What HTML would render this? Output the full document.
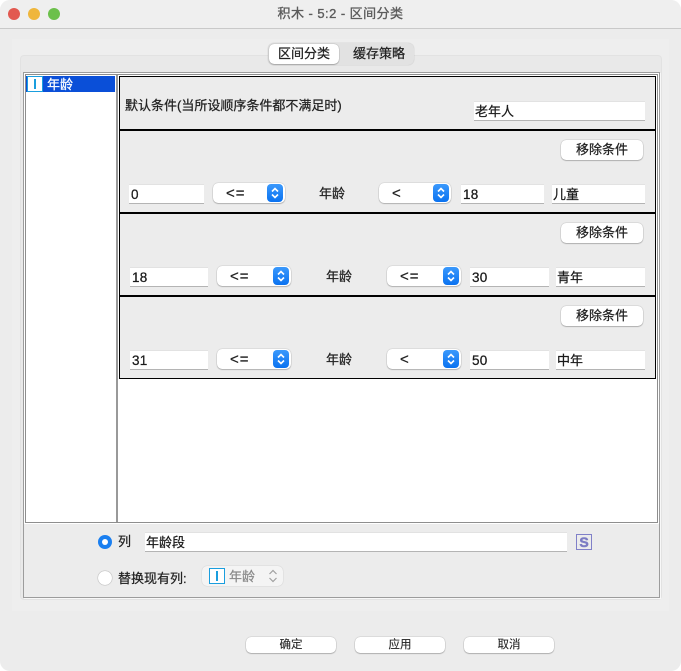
<!DOCTYPE html>
<html><head><meta charset="utf-8">
<style>
html,body{margin:0;padding:0;background:#fff;}
#w{position:relative;width:681px;height:671px;overflow:hidden;background:#fff;font-family:"Liberation Sans","Noto Sans CJK SC",sans-serif;font-size:13px;color:#222;-webkit-text-stroke:.25px currentColor;}
#w div{position:absolute;box-sizing:border-box;}
.t{white-space:nowrap;line-height:18px;height:18px;}
.f{background:#fff;border-top:1px solid #e2e2e2;border-bottom:1px solid #b4b4b4;height:20px;line-height:19px;font-size:13px;padding-left:1px;white-space:nowrap;color:#1a1a1a;}
.n{padding-left:2px;font-size:13.5px;letter-spacing:.2px;}
.b{background:#fff;border-radius:5px;box-shadow:0 0 1px rgba(0,0,0,.45),0 1px 1px rgba(0,0,0,.2);text-align:center;white-space:nowrap;color:#222;}
.k{font-size:11.5px;line-height:17px;height:16px;width:90px;top:637px;-webkit-text-stroke:.1px #222;}
.s{background:#fff;border-radius:5px;box-shadow:0 0 1px rgba(0,0,0,.4),0 1px 1px rgba(0,0,0,.2);height:20px;line-height:21px;white-space:nowrap;font-size:15px;letter-spacing:1px;}
.a{background:linear-gradient(#3b99fc,#0a72f0);border-radius:4px;width:16px;height:18px;top:1px;right:2px;}
.a svg{display:block;}
.line{background:#000;}
</style></head><body>
<div id="w">
<div style="left:0;top:0;width:681px;height:671px;background:#ececec;border-radius:10px;"></div>
<div style="left:0;top:0;width:681px;height:29px;background:#efefef;border-radius:10px 10px 0 0;border-bottom:1px solid #c9c9c9;"></div>
<div style="left:8px;top:8px;width:12px;height:12px;border-radius:50%;background:#e25950;"></div>
<div style="left:28px;top:8px;width:12px;height:12px;border-radius:50%;background:#efb63c;"></div>
<div style="left:48px;top:8px;width:12px;height:12px;border-radius:50%;background:#6cc04b;"></div>
<div class="t" style="left:0;width:681px;top:5px;text-align:center;color:#5c5c5c;font-size:13px;letter-spacing:.45px;-webkit-text-stroke:.35px #5c5c5c;">积木 - 5:2 - 区间分类</div>

<div style="left:12px;top:39px;width:657px;height:572px;background:#eeeeee;"></div>
<div style="left:20px;top:55px;width:642px;height:545px;background:#e9e9e9;border:1px solid #e2e2e2;border-radius:4px;"></div>

<div style="left:268px;top:43px;width:146px;height:22px;background:#e2e2e2;border-radius:6px;box-shadow:0 0 1px rgba(0,0,0,.25);"></div>
<div class="b" style="left:269px;top:44px;width:70px;height:20px;line-height:20px;">区间分类</div>
<div class="t" style="left:353px;top:45px;color:#222;">缓存策略</div>

<div style="left:23px;top:72px;width:637px;height:526px;background:#ececec;border:1px solid #9c9c9c;box-shadow:1px 1px 0 #f8f8f8;"></div>
<div style="left:25px;top:74px;width:633px;height:449px;background:#fff;border:1px solid #8e8e8e;outline:1px solid #fff;"></div>
<div style="left:116px;top:75px;width:2px;height:447px;background:#999;"></div>

<div style="left:26px;top:76px;width:89px;height:16px;background:#0a4fd8;"></div>
<div style="left:27px;top:76px;width:16px;height:16px;background:#fff;border:1px solid #1a9ede;"></div>
<div style="left:34px;top:79px;width:2px;height:10px;background:#1a9ede;"></div>
<div class="t" style="left:47px;top:76px;color:#fff;">年龄</div>

<div style="left:119px;top:76px;width:537px;height:303px;background:#ececec;border:1px solid #000;"></div>
<div class="line" style="left:120px;top:129px;width:535px;height:2px;"></div>
<div class="line" style="left:120px;top:212px;width:535px;height:2px;"></div>
<div class="line" style="left:120px;top:295px;width:535px;height:2px;"></div>

<div class="t" style="left:125px;top:97px;">默认条件(当所设顺序条件都不满足时)</div>
<div class="f" style="left:474px;top:101px;width:171px;">老年人</div>

<div class="b" style="left:561px;top:140px;width:82px;height:20px;line-height:20px;">移除条件</div>
<div class="f n" style="left:129px;top:184px;width:75px;">0</div>
<div class="s" style="left:213px;top:183px;width:72px;padding-left:13px;">&lt;=<div class="a"><svg width="16" height="18" viewBox="0 0 16 18"><path d="M5 7.5l3-3 3 3M5 10.5l3 3 3-3" fill="none" stroke="#fff" stroke-width="1.6"/></svg></div></div>
<div class="t" style="left:319px;top:185px;">年龄</div>
<div class="s" style="left:379px;top:183px;width:72px;padding-left:13px;">&lt;<div class="a"><svg width="16" height="18" viewBox="0 0 16 18"><path d="M5 7.5l3-3 3 3M5 10.5l3 3 3-3" fill="none" stroke="#fff" stroke-width="1.6"/></svg></div></div>
<div class="f n" style="left:461px;top:184px;width:83px;">18</div>
<div class="f" style="left:552px;top:184px;width:93px;">儿童</div>

<div class="b" style="left:561px;top:223px;width:82px;height:20px;line-height:20px;">移除条件</div>
<div class="f n" style="left:130px;top:267px;width:78px;">18</div>
<div class="s" style="left:217px;top:266px;width:74px;padding-left:13px;">&lt;=<div class="a"><svg width="16" height="18" viewBox="0 0 16 18"><path d="M5 7.5l3-3 3 3M5 10.5l3 3 3-3" fill="none" stroke="#fff" stroke-width="1.6"/></svg></div></div>
<div class="t" style="left:326px;top:268px;">年龄</div>
<div class="s" style="left:387px;top:266px;width:74px;padding-left:13px;">&lt;=<div class="a"><svg width="16" height="18" viewBox="0 0 16 18"><path d="M5 7.5l3-3 3 3M5 10.5l3 3 3-3" fill="none" stroke="#fff" stroke-width="1.6"/></svg></div></div>
<div class="f n" style="left:470px;top:267px;width:79px;">30</div>
<div class="f" style="left:556px;top:267px;width:89px;">青年</div>

<div class="b" style="left:561px;top:306px;width:82px;height:20px;line-height:20px;">移除条件</div>
<div class="f n" style="left:130px;top:350px;width:78px;">31</div>
<div class="s" style="left:217px;top:349px;width:74px;padding-left:13px;">&lt;=<div class="a"><svg width="16" height="18" viewBox="0 0 16 18"><path d="M5 7.5l3-3 3 3M5 10.5l3 3 3-3" fill="none" stroke="#fff" stroke-width="1.6"/></svg></div></div>
<div class="t" style="left:326px;top:351px;">年龄</div>
<div class="s" style="left:387px;top:349px;width:74px;padding-left:13px;">&lt;<div class="a"><svg width="16" height="18" viewBox="0 0 16 18"><path d="M5 7.5l3-3 3 3M5 10.5l3 3 3-3" fill="none" stroke="#fff" stroke-width="1.6"/></svg></div></div>
<div class="f n" style="left:470px;top:350px;width:79px;">50</div>
<div class="f" style="left:556px;top:350px;width:89px;">中年</div>

<div style="left:98px;top:535px;width:14px;height:14px;border-radius:50%;background:#1a7ff0;"></div>
<div style="left:102px;top:539px;width:6px;height:6px;border-radius:50%;background:#fff;"></div>
<div class="t" style="left:118px;top:533px;">列</div>
<div class="f" style="left:145px;top:532px;width:422px;">年龄段</div>
<div style="left:576px;top:534px;width:16px;height:16px;border:1px solid #8080c8;text-align:center;line-height:14px;font-size:14px;font-weight:bold;color:#7c7cc4;-webkit-text-stroke:.5px #7c7cc4;">S</div>

<div style="left:98px;top:571px;width:14px;height:14px;border-radius:50%;background:#fff;box-shadow:0 0 1px rgba(0,0,0,.6);"></div>
<div class="t" style="left:118px;top:570px;">替换现有列:</div>
<div style="left:202px;top:566px;width:81px;height:20px;background:#f4f4f4;border-radius:5px;box-shadow:0 0 1px rgba(0,0,0,.25);"></div>
<div style="left:209px;top:568px;width:16px;height:16px;background:#fff;border:1px solid #1a9ede;"></div>
<div style="left:216px;top:571px;width:2px;height:10px;background:#1a9ede;"></div>
<div class="t" style="left:229px;top:568px;color:#8a8a8a;">年龄</div>
<svg style="position:absolute;left:268px;top:569px;" width="10" height="14" viewBox="0 0 10 14"><path d="M1.5 5L5 1.5 8.5 5M1.5 9L5 12.5 8.5 9" fill="none" stroke="#a0a0a0" stroke-width="1.2"/></svg>

<div class="b k" style="left:246px;">确定</div>
<div class="b k" style="left:355px;">应用</div>
<div class="b k" style="left:464px;">取消</div>
</div>
</body></html>
